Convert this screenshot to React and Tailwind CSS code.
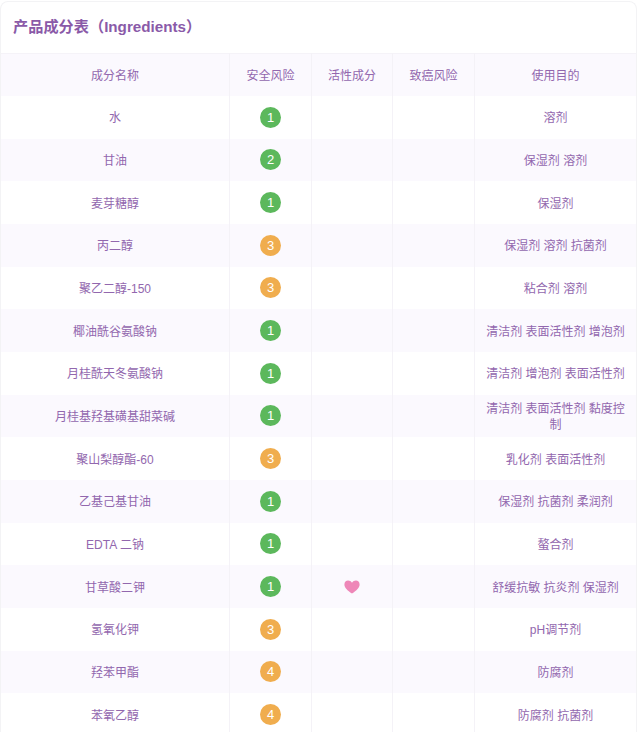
const rows = [
  ["水", 1, false, "溶剂"],
  ["甘油", 2, false, "保湿剂 溶剂"],
  ["麦芽糖醇", 1, false, "保湿剂"],
  ["丙二醇", 3, false, "保湿剂 溶剂 抗菌剂"],
  ["聚乙二醇-150", 3, false, "粘合剂 溶剂"],
  ["椰油酰谷氨酸钠", 1, false, "清洁剂 表面活性剂 增泡剂"],
  ["月桂酰天冬氨酸钠", 1, false, "清洁剂 增泡剂 表面活性剂"],
  ["月桂基羟基磺基甜菜碱", 1, false, "清洁剂 表面活性剂 黏度控制"],
  ["聚山梨醇酯-60", 3, false, "乳化剂 表面活性剂"],
  ["乙基己基甘油", 1, false, "保湿剂 抗菌剂 柔润剂"],
  ["EDTA 二钠", 1, false, "螯合剂"],
  ["甘草酸二钾", 1, true, "舒缓抗敏 抗炎剂 保湿剂"],
  ["氢氧化钾", 3, false, "pH调节剂"],
  ["羟苯甲酯", 4, false, "防腐剂"],
  ["苯氧乙醇", 4, false, "防腐剂 抗菌剂"],
];

function Badge({ n }) {
  return (
    <span className={`inline-flex h-[21px] w-[21px] items-center justify-center rounded-full text-[13px] font-medium leading-none text-white ${n <= 2 ? "bg-[#5cb85c]" : "bg-[#f0ad4e]"}`}>
      {n}
    </span>
  );
}

function Heart() {
  return (
    <svg className="inline-block align-middle" width="16" height="14" viewBox="0 0 16 14" aria-hidden="true">
      <path d="M8 13.6C3.4 10.2.4 7.6.4 4.4.4 2.2 2 .6 4.1.6 5.6.6 7.1 1.4 8 2.8 8.9 1.4 10.4.6 11.9.6 14 .6 15.6 2.2 15.6 4.4c0 3.2-3 5.8-7.6 9.2z" fill="#ee87b8" />
    </svg>
  );
}

export default function App() {
  return (
    <div className="h-[732px] w-[640px] overflow-hidden bg-white pt-px font-['Liberation_Sans','Noto_Sans_CJK_SC',sans-serif]">
      <div className="w-[637px] rounded-t-[8px] border-t border-r border-l border-[#f3f3f5] bg-white">
        <h2 className="flex h-[51px] items-center pl-[12px] text-[15.2px] font-bold text-[#8a5aa8]">
          产品成分表（Ingredients）
        </h2>
        <table className="w-[635px] table-fixed border-collapse text-center text-[12px] leading-[16px] text-[#9267ae]">
          <colgroup>
            <col className="w-[228.5px]" />
            <col className="w-[82px]" />
            <col className="w-[81px]" />
            <col className="w-[82px]" />
            <col />
          </colgroup>
          <thead>
            <tr className="h-[42.5px] border-t border-[#f5f3f8] bg-[#fbf9fe]">
              {["成分名称", "安全风险", "活性成分", "致癌风险", "使用目的"].map((h) => (
                <th key={h} className="border-r border-[#f4f2f7] p-0 pt-[2px] font-normal last:border-r-0">{h}</th>
              ))}
            </tr>
          </thead>
          <tbody>
            {rows.map(([name, n, heart, use], i) => (
              <tr key={name} className={`h-[42.67px] ${i % 2 ? "bg-[#fbf9fe]" : "bg-white"}`}>
                <td className="border-r border-[#f4f2f7] p-0 pt-[2px]">{name}</td>
                <td className="border-r border-[#f4f2f7] p-0"><Badge n={n} /></td>
                <td className="border-r border-[#f4f2f7] p-0">{heart && <Heart />}</td>
                <td className="border-r border-[#f4f2f7] p-0"></td>
                <td className="px-[10px] pt-[2px] pb-0">{use}</td>
              </tr>
            ))}
          </tbody>
        </table>
      </div>
    </div>
  );
}
